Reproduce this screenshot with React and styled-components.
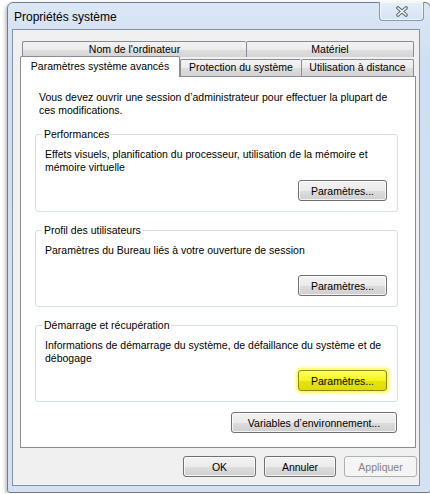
import React from 'react';
import styled, { createGlobalStyle, css } from 'styled-components';

const GlobalStyle = createGlobalStyle`
  html, body {
    margin: 0;
    padding: 0;
    background: #ffffff;
    overflow: hidden;
  }
  body {
    font-family: "Liberation Sans", Arial, sans-serif;
    font-size: 10.5px;
    color: #000000;
  }
`;

const Window = styled.div`
  box-sizing: border-box;
  margin: 2px 0 0 7px;
  width: 424px;
  height: 491px;
  border: 1px solid #6f7d8e;
  border-radius: 6px 6px 3px 3px;
  background: linear-gradient(#dbe7f6, #cfdef2 60px, #d3e1f3);
  box-shadow: -1px 2px 4px rgba(0, 0, 0, 0.35);
  padding: 0 0 0 4px;
  display: flex;
  flex-direction: column;
`;

const TitleBar = styled.div`
  height: 26px;
  display: flex;
  justify-content: space-between;
  align-items: flex-start;
  padding-right: 6px;
`;

const Title = styled.div`
  font-size: 12px;
  line-height: 14px;
  padding: 7px 0 0 2px;
`;

const CloseButton = styled.div`
  box-sizing: border-box;
  margin-top: -1px;
  width: 45px;
  height: 19px;
  border: 1px solid #8a97a8;
  border-top: none;
  border-radius: 0 0 4px 4px;
  background: linear-gradient(#e6eef9, #d6e3f3);
  box-shadow: inset 0 0 0 1px rgba(255, 255, 255, 0.6);
  display: flex;
  align-items: center;
  justify-content: center;
`;

const Client = styled.div`
  box-sizing: border-box;
  width: 408px;
  height: 457px;
  border: 1px solid #8592a3;
  background: #f0f0f0;
  padding: 11px 3px 8px 7px;
  display: flex;
  flex-direction: column;
`;

const TopRow = styled.div`
  display: flex;
  margin-left: 2px;
  height: 16px;
`;

const SecondRow = styled.div`
  display: flex;
  align-items: flex-end;
  height: 20px;
  margin-top: -1px;
`;

const Tab = styled.div`
  box-sizing: border-box;
  width: ${(p) => p.$width}px;
  height: ${(p) => (p.$active ? 21 : p.$top ? 16 : 17)}px;
  border: 1px solid #898c95;
  border-bottom: none;
  border-right: ${(p) => (p.$last || p.$active ? '1px solid #898c95' : 'none')};
  border-radius: 2px 2px 0 0;
  text-align: center;
  line-height: 13px;
  white-space: nowrap;
  background: linear-gradient(#f3f3f3, #ebebeb 50%, #dedede 51%, #d4d4d4);
  padding-top: 1px;
  ${(p) =>
    p.$active &&
    css`
      position: relative;
      z-index: 1;
      margin-bottom: -1px;
      background: #ffffff;
      padding-top: 3px;
    `}
`;

const Panel = styled.div`
  box-sizing: border-box;
  width: 396px;
  flex: 1;
  background: #ffffff;
  border: 1px solid #898c95;
  padding: 14px 17px 0 14px;
  display: flex;
  flex-direction: column;
`;

const Intro = styled.div`
  margin-left: 4px;
  line-height: 13px;
`;

const GroupBox = styled.fieldset`
  box-sizing: border-box;
  margin: ${(p) => (p.$first ? 11 : 12)}px 0 0 0;
  min-width: 0;
  border: 1px solid #d5dfe5;
  border-radius: 3px;
  padding: 7px 10px 10px 9px;
`;

const Legend = styled.legend`
  padding: 0 2px;
  margin-left: -3px;
  line-height: 13px;
`;

const GroupBody = styled.div`
  height: ${(p) => p.$height}px;
  display: flex;
  flex-direction: column;
`;

const GroupText = styled.div`
  line-height: 13px;
`;

const Button = styled.div`
  box-sizing: border-box;
  width: ${(p) => p.$width}px;
  height: 21px;
  border: 1px solid #707070;
  border-radius: 3px;
  background: linear-gradient(#f2f2f2, #ebebeb 50%, #dddddd 51%, #cfcfcf);
  box-shadow: inset 0 0 0 1px rgba(255, 255, 255, 0.75);
  display: flex;
  align-items: center;
  justify-content: center;
  white-space: nowrap;
  ${(p) =>
    p.$highlight &&
    css`
      border-color: #8a8a20;
      background: linear-gradient(#ffff5a, #f4f420 50%, #e6e600 51%, #dcdc00);
      box-shadow: 0 0 3px 2px #ffff30;
    `}
  ${(p) =>
    p.$disabled &&
    css`
      border-color: #adb2b5;
      background: #f4f4f4;
      box-shadow: none;
      color: #838383;
    `}
`;

const GroupButton = styled(Button)`
  margin-top: auto;
  align-self: flex-end;
`;

const EnvButton = styled(Button)`
  align-self: flex-end;
  margin: 10px 1px 0 0;
`;

const Footer = styled.div`
  display: flex;
  justify-content: flex-end;
  gap: 8px;
  margin: 8px -1px 0 0;
`;

function CloseGlyph() {
  return (
    <svg width="14" height="11" viewBox="0 0 14 11">
      <path d="M3 2 L11 9 M11 2 L3 9" stroke="#5a6472" strokeWidth="3.6" strokeLinecap="round" fill="none" />
      <path d="M3 2 L11 9 M11 2 L3 9" stroke="#ffffff" strokeWidth="1.6" strokeLinecap="round" fill="none" />
    </svg>
  );
}

export default function App() {
  return (
    <>
      <GlobalStyle />
      <Window>
        <TitleBar>
          <Title>Propriétés système</Title>
          <CloseButton>
            <CloseGlyph />
          </CloseButton>
        </TitleBar>
        <Client>
          <TopRow>
            <Tab $top $width={224}>Nom de l'ordinateur</Tab>
            <Tab $top $last $width={168}>Matériel</Tab>
          </TopRow>
          <SecondRow>
            <Tab $active $width={160}>Paramètres système avancés</Tab>
            <Tab $width={121}>Protection du système</Tab>
            <Tab $last $width={113}>Utilisation à distance</Tab>
          </SecondRow>
          <Panel>
            <Intro>
              Vous devez ouvrir une session d’administrateur pour effectuer la plupart de
              <br />
              ces modifications.
            </Intro>
            <GroupBox $first>
              <Legend>Performances</Legend>
              <GroupBody $height={53}>
                <GroupText>
                  Effets visuels, planification du processeur, utilisation de la mémoire et
                  <br />
                  mémoire virtuelle
                </GroupText>
                <GroupButton $width={89}>Paramètres...</GroupButton>
              </GroupBody>
            </GroupBox>
            <GroupBox>
              <Legend>Profil des utilisateurs</Legend>
              <GroupBody $height={52}>
                <GroupText>Paramètres du Bureau liés à votre ouverture de session</GroupText>
                <GroupButton $width={89}>Paramètres...</GroupButton>
              </GroupBody>
            </GroupBox>
            <GroupBox>
              <Legend>Démarrage et récupération</Legend>
              <GroupBody $height={52}>
                <GroupText>
                  Informations de démarrage du système, de défaillance du système et de
                  <br />
                  débogage
                </GroupText>
                <GroupButton $width={89} $highlight>Paramètres...</GroupButton>
              </GroupBody>
            </GroupBox>
            <EnvButton $width={166}>Variables d’environnement...</EnvButton>
          </Panel>
          <Footer>
            <Button $width={73}>OK</Button>
            <Button $width={72}>Annuler</Button>
            <Button $width={73} $disabled>Appliquer</Button>
          </Footer>
        </Client>
      </Window>
    </>
  );
}
